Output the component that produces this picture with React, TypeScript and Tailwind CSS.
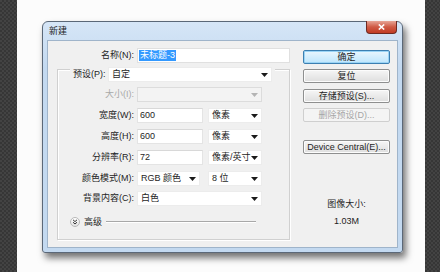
import React from "react";

const FONT = "font-['Liberation_Sans','Noto_Sans_CJK_SC',sans-serif]";

function Arrow({ disabled }: { disabled?: boolean }) {
  return (
    <svg width="7" height="4" viewBox="0 0 7 4" className="shrink-0">
      <path d="M0 0h7L3.5 4z" fill={disabled ? "#b4b4b4" : "#1a1a1a"} />
    </svg>
  );
}

function Label({ children, w = "w-[76px]", disabled }: { children: React.ReactNode; w?: string; disabled?: boolean }) {
  return (
    <div className={`${w} shrink-0 text-right leading-none whitespace-nowrap ${disabled ? "text-[#a8a8a8]" : "text-[#1e1e1e]"}`}>
      {children}
    </div>
  );
}

function Input({ w, children }: { w: string; children?: React.ReactNode }) {
  return (
    <div className={`${w} h-[15px] shrink-0 bg-white border border-[#e4e4e4] border-t-[#d8d8d8] flex items-center pl-[2px] leading-none text-[#1e1e1e]`}>
      {children}
    </div>
  );
}

function Select({ w, text, disabled }: { w: string; text?: string; disabled?: boolean }) {
  return (
    <div
      className={`${w} h-[15px] shrink-0 flex items-center justify-between pl-[3px] pr-[3px] leading-none whitespace-nowrap overflow-hidden border ${
        disabled ? "bg-[#f3f3f3] border-[#dcdcdc]" : "bg-white border-[#ececec]"
      } text-[#1e1e1e]`}
    >
      <span>{text}</span>
      <Arrow disabled={disabled} />
    </div>
  );
}

function Btn({ children, primary, disabled }: { children: React.ReactNode; primary?: boolean; disabled?: boolean }) {
  const cls = disabled
    ? "bg-[#f4f4f4] border-[#cfcfcf] text-[#a6a6a6]"
    : primary
    ? "bg-[linear-gradient(#eaf6fd,#bee6fd)] border-[#3c7fb1] text-[#1e1e1e] shadow-[inset_0_0_0_1px_#9bd4f5]"
    : "bg-[linear-gradient(#f6f6f6,#dedede)] border-[#8e8f8f] text-[#1e1e1e] shadow-[inset_0_0_0_1px_#fcfcfc]";
  return (
    <div className={`w-[87px] h-[14px] rounded-[2px] border ${cls} flex items-center justify-center leading-none whitespace-nowrap`}>
      {children}
    </div>
  );
}

function Stripe({ w }: { w: string }) {
  return (
    <div
      className={`${w} h-full shrink-0 bg-[repeating-conic-gradient(#363636_0_25%,#434343_0_50%)] bg-[length:4px_4px]`}
    />
  );
}

export default function App() {
  return (
    <div className={`w-[440px] h-[272px] flex bg-[#fcfcfc] overflow-hidden text-[9px] ${FONT}`}>
      <Stripe w="w-[17px]" />
      <div className="flex-1 h-full">
        {/* window */}
        <div className="ml-[25px] mt-[21px] w-[361px] h-[232px] rounded-t-[6px] rounded-b-[3px] border border-[#5b6878] bg-[linear-gradient(#d6e6f7,#c3d9f0_20%,#c3d9f0)] shadow-[3px_5px_7px_rgba(0,0,0,0.55)] flex flex-col">
          {/* title bar */}
          <div className="h-[18px] shrink-0 flex justify-between pl-[6px] pr-[5px]">
            <div className="self-center text-[#1e1e1e] leading-none">新建</div>
            <div className="-mt-[1px] w-[31px] h-[13px] rounded-b-[4px] border border-[#6e2a22] border-t-0 bg-[linear-gradient(#e7a596,#cf5a44_50%,#c13c25)] flex items-center justify-center">
              <svg width="7" height="6" viewBox="0 0 7 6">
                <path d="M0.8 0.5L6.2 5.5M6.2 0.5L0.8 5.5" stroke="#fff" strokeWidth="1.6" />
              </svg>
            </div>
          </div>
          {/* content */}
          <div className="mx-[4px] mb-[4px] flex-1 border border-[#9fb4ca] bg-[#f0f0f0] flex">
            {/* left column */}
            <div className="w-[242px] shrink-0 flex flex-col">
              <div className="mt-[7px] flex items-center h-[15px]">
                <Label w="w-[86px]">名称(N):</Label>
                <div className="ml-[3px] w-[154px] h-[15px] bg-white border border-[#e0e0e0] flex items-center pl-[1px]">
                  <span className="bg-[#3399ff] text-white leading-none px-[1px] py-[1px]">未标题-3</span>
                </div>
              </div>
              {/* group box */}
              <div className="ml-[9px] mt-[6px] w-[233px] h-[171px] border border-[#d0d0d0] shadow-[inset_1px_1px_0_#fff,1px_1px_0_#fff] flex flex-col">
                <div className="-mt-[3px] ml-[12px] w-fit bg-[#f0f0f0] pl-[3px] pr-[3px] flex items-center h-[15px]">
                  <div className="leading-none text-[#1e1e1e] w-[35px] whitespace-nowrap">预设(P):</div>
                  <Select w="w-[164px]" text="自定" />
                </div>
                <div className="mt-[5px] flex items-center h-[15px]">
                  <Label disabled>大小(I):</Label>
                  <div className="ml-[3px]">
                    <Select w="w-[125px]" disabled />
                  </div>
                </div>
                <div className="mt-[6px] flex items-center h-[15px]">
                  <Label>宽度(W):</Label>
                  <div className="ml-[3px] flex gap-[5px]">
                    <Input w="w-[66px]">600</Input>
                    <Select w="w-[54px]" text="像素" />
                  </div>
                </div>
                <div className="mt-[6px] flex items-center h-[15px]">
                  <Label>高度(H):</Label>
                  <div className="ml-[3px] flex gap-[5px]">
                    <Input w="w-[66px]">600</Input>
                    <Select w="w-[54px]" text="像素" />
                  </div>
                </div>
                <div className="mt-[6px] flex items-center h-[15px]">
                  <Label>分辨率(R):</Label>
                  <div className="ml-[3px] flex gap-[5px]">
                    <Input w="w-[66px]">72</Input>
                    <Select w="w-[54px]" text="像素/英寸" />
                  </div>
                </div>
                <div className="mt-[6px] flex items-center h-[15px]">
                  <Label>颜色模式(M):</Label>
                  <div className="ml-[3px] flex gap-[8px]">
                    <Select w="w-[63px]" text="RGB 颜色" />
                    <Select w="w-[54px]" text="8 位" />
                  </div>
                </div>
                <div className="mt-[5px] flex items-center h-[15px]">
                  <Label>背景内容(C):</Label>
                  <div className="ml-[3px]">
                    <Select w="w-[125px]" text="白色" />
                  </div>
                </div>
                <div className="mt-[10px] flex items-center h-[12px] pl-[12px] pr-[33px]">
                  <div className="w-[10px] h-[10px] rounded-full border border-[#b8b8b8] bg-[linear-gradient(#ffffff,#e2e2e2)] flex items-center justify-center">
                    <svg width="6" height="6" viewBox="0 0 6 6">
                      <path d="M1 0.8L3 2.6L5 0.8M1 3.2L3 5L5 3.2" stroke="#333" strokeWidth="1" fill="none" />
                    </svg>
                  </div>
                  <div className="ml-[4px] leading-none text-[#1e1e1e]">高级</div>
                  <div className="ml-[4px] flex-1 h-[2px] border-t border-[#a8a8a8] border-b border-b-white" />
                </div>
              </div>
            </div>
            {/* right column */}
            <div className="ml-[13px] w-[87px] flex flex-col">
              <div className="mt-[9px]">
                <Btn primary>确定</Btn>
              </div>
              <div className="mt-[5px]">
                <Btn>复位</Btn>
              </div>
              <div className="mt-[6px]">
                <Btn>存储预设(S)...</Btn>
              </div>
              <div className="mt-[5px]">
                <Btn disabled>删除预设(D)...</Btn>
              </div>
              <div className="mt-[18px]">
                <Btn>Device Central(E)...</Btn>
              </div>
              <div className="mt-[45px] text-center leading-[10px] text-[#1e1e1e]">图像大小:</div>
              <div className="mt-[7px] text-center leading-[10px] text-[#1e1e1e]">1.03M</div>
            </div>
          </div>
        </div>
      </div>
      <Stripe w="w-[15px]" />
    </div>
  );
}
